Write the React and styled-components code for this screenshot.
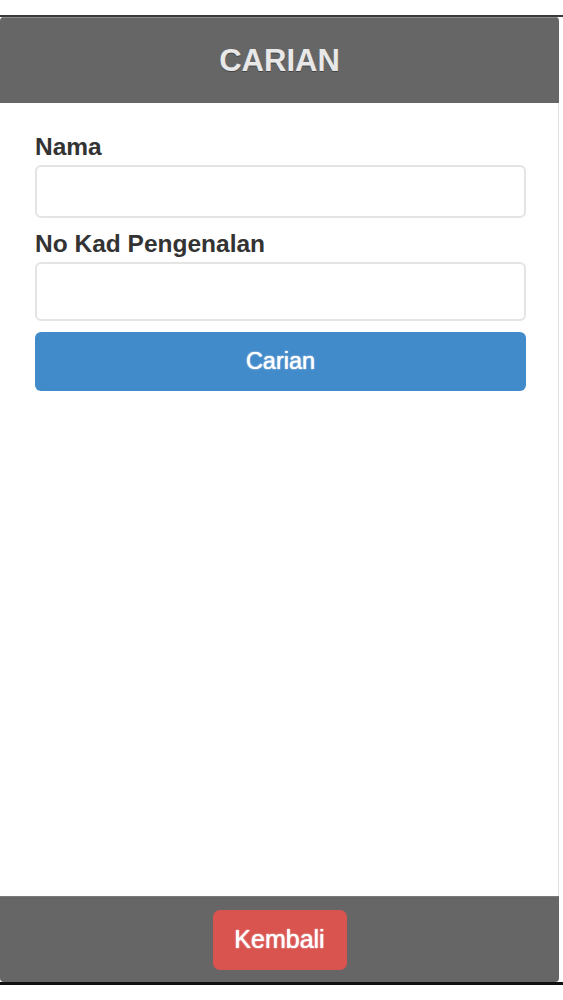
import React from "react";
import styled, { createGlobalStyle } from "styled-components";

const Global = createGlobalStyle`
  html, body {
    margin: 0;
    padding: 0;
    background: #fff;
    font-family: "Liberation Sans", Arial, Helvetica, sans-serif;
  }
`;

const Frame = styled.div`
  margin-top: 15px;
  height: 970px;
  border-top: 2px solid #3a3a3a;
  border-bottom: 3px solid #111;
  display: flex;
  flex-direction: column;
  box-sizing: border-box;
`;

const Page = styled.div`
  width: 559px;
  flex: 1;
  display: flex;
  flex-direction: column;
  background: #fff;
  border-radius: 4px;
  overflow: hidden;
`;

const Bar = styled.div`
  background: #666;
  display: flex;
  align-items: center;
  justify-content: center;
  height: ${(p) => p.$h}px;
  border-top: 1px solid ${(p) => (p.$top ? "#8a8a8a" : "#7a7a7a")};
  flex-shrink: 0;
`;

const Title = styled.h1`
  margin: 0;
  font-size: 31px;
  font-weight: bold;
  color: #e8e8e8;
  text-shadow: 0 1px 0 #444;
`;

const Content = styled.div`
  flex: 1;
  padding: 30px 32px 0 35px;
  border-right: 1px solid #e2e2e2;
  display: flex;
  flex-direction: column;
`;

const Label = styled.label`
  font-size: 24.5px;
  font-weight: bold;
  color: #333;
  line-height: 28px;
  margin-bottom: 4px;
`;

const Input = styled.input`
  box-sizing: border-box;
  width: 491px;
  height: ${(p) => p.$h}px;
  border: 2px solid #e4e4e4;
  border-radius: 6px;
  background: #fff;
  margin-bottom: ${(p) => p.$mb}px;
  outline: none;
`;

const SearchButton = styled.button`
  width: 491px;
  height: 59px;
  border: none;
  border-radius: 6px;
  background: #428bca;
  color: #fff;
  font-family: inherit;
  font-size: 23.5px;
  text-shadow: 0 0 1px #fff, 0 0 2px rgba(255, 255, 255, 0.5);
`;

const BackButton = styled.button`
  width: 134px;
  height: 60px;
  border: none;
  border-radius: 7px;
  background: #d9534f;
  color: #fff;
  font-family: inherit;
  font-size: 25px;
  text-shadow: 0 0 1px #fff, 0 0 2px rgba(255, 255, 255, 0.5);
`;

export default function App() {
  return (
    <>
      <Global />
      <Frame>
        <Page>
          <Bar $h={85} $top>
            <Title>CARIAN</Title>
          </Bar>
          <Content>
            <Label>Nama</Label>
            <Input $h={53} $mb={12} />
            <Label>No Kad Pengenalan</Label>
            <Input $h={59} $mb={11} />
            <SearchButton>Carian</SearchButton>
          </Content>
          <Bar $h={85}>
            <BackButton>Kembali</BackButton>
          </Bar>
        </Page>
      </Frame>
    </>
  );
}
